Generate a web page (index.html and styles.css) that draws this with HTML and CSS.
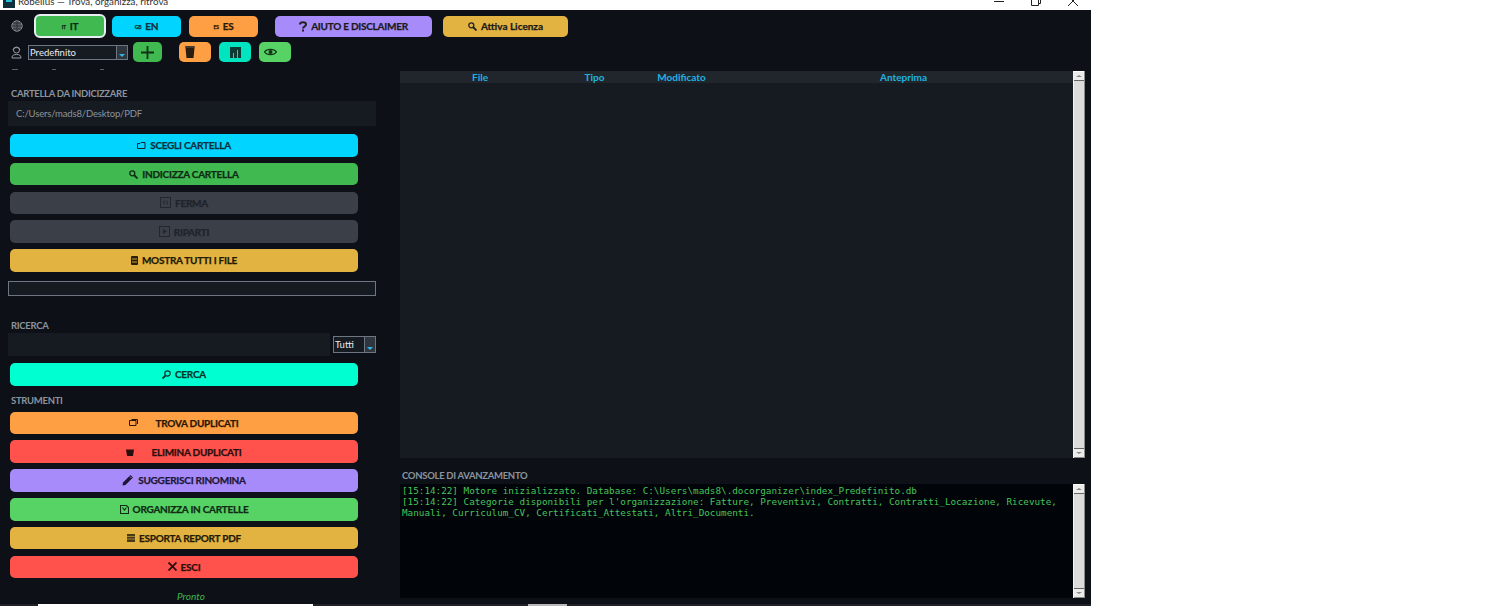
FILE: index.html
```html
<!DOCTYPE html>
<html lang="it">

<head>
	<meta charset="UTF-8">
	<meta name="viewport" content="width=device-width, initial-scale=1.0">
	<title>Robelius</title>
	<link rel="stylesheet" href="styles.css">
</head>

<body>
	<div class="titlebar">
		<div class="title-inner">
			<svg class="app-icon" width="12" height="14" viewBox="0 0 12 14"><rect width="12" height="14" fill="#12303c"/><rect x="3" y="2" width="6" height="6" fill="#23c4d8"/></svg>
			<span class="title-text">Robelius — Trova, organizza, ritrova</span>
			<div class="win-controls">
				<svg width="10" height="10" viewBox="0 0 10 10"><path d="M0 5.5H10" stroke="#222"/></svg>
				<svg width="10" height="10" viewBox="0 0 10 10"><path d="M.5 2.500h7v7h-7zM2.500 2.500v-2h7v7h-2" stroke="#222" fill="none"/></svg>
				<svg width="10" height="10" viewBox="0 0 10 10"><path d="M0 0L10 10M10 0L0 10" stroke="#222"/></svg>
			</div>
		</div>
	</div>

	<div class="app">
		<div class="toolbar">
			<svg class="globe" width="12" height="12" viewBox="0 0 12 12"><circle cx="6" cy="6" r="5.200" fill="#555a60" stroke="#8b8f94"/><path d="M1 6h10M6 1v10M2 3h8M2 9h8" stroke="#25282c" stroke-width=".8"/></svg>
			<button class="btn btn-lang btn-it active"><small>IT</small> IT</button>
			<button class="btn btn-lang btn-en"><small>GB</small> EN</button>
			<button class="btn btn-lang btn-es"><small>ES</small> ES</button>
			<button class="btn btn-help"><svg width="8" height="11" viewBox="0 0 8 11"><path d="M1 3.500C1 .5 7 .5 7 3.500C7 5.500 4 5.500 4 7.500" fill="none" stroke="#222" stroke-width="2"/><rect x="3" y="8.500" width="2" height="2" fill="#222"/></svg> AIUTO E DISCLAIMER</button>
			<button class="btn btn-license"><svg width="9" height="9" viewBox="0 0 9 9"><circle cx="3.300" cy="3.300" r="2.500" fill="none" stroke="#222" stroke-width="1.300"/><path d="M5 5L8.500 8.500" stroke="#222" stroke-width="1.800"/></svg> Attiva Licenza</button>
		</div>

		<div class="profile-row">
			<svg class="user-icon" width="11" height="13" viewBox="0 0 11 13"><circle cx="5.500" cy="4" r="3" fill="none" stroke="#9a9da1"/><path d="M2 3.500C3 1 8 1 9 3.500M1 12C1 9 3 8.500 5.500 8.500S10 9 10 12Z" fill="none" stroke="#9a9da1"/></svg>
			<div class="combo combo-profile"><span>Predefinito</span><i class="combo-arrow"></i></div>
			<button class="btn btn-square btn-add"><svg width="13" height="13" viewBox="0 0 13 13"><path d="M6.500 0V13M0 6.500H13" stroke="#123018" stroke-width="1.800"/></svg></button>
			<button class="btn btn-square btn-trash"><svg class="ic-left" width="10" height="12" viewBox="0 0 10 12"><path d="M.5 2H9.500L8.500 12H1.500Z" fill="#2a1c10"/><rect y="0" width="10" height="2" rx="1" fill="#4a3a2c"/></svg></button>
			<button class="btn btn-square btn-stats"><svg width="11" height="11" viewBox="0 0 11 11"><path d="M0 0H11V11H8V3H7V11H4V6H3V11H0Z" fill="#0e3a34"/></svg></button>
			<button class="btn btn-square btn-view"><svg class="ic-left" width="13" height="8" viewBox="0 0 13 8"><path d="M.5 4C3 .5 10 .5 12.500 4C10 7.500 3 7.500 .5 4Z" fill="none" stroke="#12321a" stroke-width="1.200"/><circle cx="6.500" cy="4" r="2" fill="#12321a"/></svg></button>
		</div>

		<div class="dashes"><i></i><i></i><i></i></div>

		<div class="main">
			<div class="sidebar">
				<div class="section-label">CARTELLA DA INDICIZZARE</div>
				<div class="path-field">C:/Users/mads8/Desktop/PDF</div>

				<div class="btn-stack">
					<button class="btn btn-wide c-cyan"><svg width="9" height="7" viewBox="0 0 9 7"><path d="M.5 1.500h2.500l1-1h4v6h-7.500z" fill="none" stroke="#123"/></svg> SCEGLI CARTELLA</button>
					<button class="btn btn-wide c-green"><svg width="9" height="9" viewBox="0 0 9 9"><circle cx="3.300" cy="3.300" r="2.500" fill="none" stroke="#0f2b14" stroke-width="1.300"/><path d="M5 5L8.500 8.500" stroke="#0f2b14" stroke-width="1.800"/></svg> INDICIZZA CARTELLA</button>
					<button class="btn btn-wide c-off"><svg width="11" height="11" viewBox="0 0 11 11"><rect x=".5" y=".5" width="10" height="10" fill="none" stroke="#23262d"/><path d="M4 3.500V7.500M7 3.500V7.500" stroke="#23262d"/></svg> FERMA</button>
					<button class="btn btn-wide c-off"><svg width="11" height="11" viewBox="0 0 11 11"><rect x=".5" y=".5" width="10" height="10" fill="none" stroke="#23262d"/><path d="M4 3L8 5.500L4 8Z" fill="#23262d"/></svg> RIPARTI</button>
					<button class="btn btn-wide c-yellow"><svg width="7" height="9" viewBox="0 0 7 9"><rect width="7" height="9" rx="1" fill="#2a2008"/><path d="M1 3H6M1 6H6" stroke="#c9a040"/></svg> MOSTRA TUTTI I FILE</button>
				</div>

				<div class="progress"></div>

				<div class="section-label label-search">RICERCA</div>
				<div class="search-row">
					<div class="search-field"></div>
					<div class="combo combo-filter"><span>Tutti</span><i class="combo-arrow"></i></div>
				</div>
				<button class="btn btn-wide c-teal btn-search"><svg width="9" height="9" viewBox="0 0 9 9"><circle cx="5.500" cy="3.500" r="2.700" fill="none" stroke="#06332c" stroke-width="1.200"/><path d="M3.500 5.500L.5 8.500" stroke="#06332c" stroke-width="1.800"/></svg> CERCA</button>

				<div class="section-label label-tools">STRUMENTI</div>
				<div class="btn-stack">
					<button class="btn btn-wide c-orange btn-spread"><svg width="9" height="7" viewBox="0 0 9 7"><path d="M.5 1.500h6.500v5h-6.500zM2.500 .5h6v4.500" fill="none" stroke="#2a1805"/></svg><span>TROVA DUPLICATI</span></button>
					<button class="btn btn-wide c-red btn-spread"><svg width="8" height="8" viewBox="0 0 8 8"><path d="M0 1.500H8L7 8H1Z" fill="#2a0e0c"/></svg><span>ELIMINA DUPLICATI</span></button>
					<button class="btn btn-wide c-purple"><svg width="12" height="12" viewBox="0 0 12 12"><path d="M8.500 1L11 3.500L3.500 11L.5 11.500L1 8.500Z" fill="#1e1638"/><path d="M8 2.500L9.500 4" stroke="#a78bfa"/></svg> SUGGERISCI RINOMINA</button>
					<button class="btn btn-wide c-lime"><svg width="9" height="9" viewBox="0 0 9 9"><path d="M.5 2.500V8.500H8.500V2.500L6.500 .5H.5ZM2.500 2.500L4.500 5L6.500 2.500" fill="none" stroke="#0f2b14" stroke-width="1.100"/></svg> ORGANIZZA IN CARTELLE</button>
					<button class="btn btn-wide c-yellow"><svg width="8" height="8" viewBox="0 0 8 8"><rect width="8" height="8" fill="#4a3a14"/><path d="M0 2.500H8M0 5H8" stroke="#c9a040" stroke-width=".7"/></svg> ESPORTA REPORT PDF</button>
					<button class="btn btn-wide c-red"><svg width="9" height="9" viewBox="0 0 9 9"><path d="M.5 .5L8.500 8.500M8.500 .5L.5 8.500" stroke="#2a0e0c" stroke-width="1.800"/></svg> ESCI</button>
				</div>

				<div class="status">Pronto</div>
			</div>

			<div class="content">
				<div class="table-wrap">
					<div class="table">
						<div class="table-head">
							<span>File</span>
							<span>Tipo</span>
							<span>Modificato</span>
							<span>Anteprima</span>
						</div>
					</div>
					<div class="scrollbar"><i class="sb-btn"></i><i class="sb-track"></i><i class="sb-btn sb-down"></i></div>
				</div>

				<div class="console-label">CONSOLE DI AVANZAMENTO</div>
				<div class="console">
					<div class="console-text">[15:14:22] Motore inizializzato. Database: C:\Users\mads8\.docorganizer\index_Predefinito.db
[15:14:22] Categorie disponibili per l'organizzazione: Fatture, Preventivi, Contratti, Contratti_Locazione, Ricevute,
Manuali, Curriculum_CV, Certificati_Attestati, Altri_Documenti.</div>
					<div class="scrollbar"><i class="sb-btn"></i><i class="sb-track"></i><i class="sb-btn sb-down"></i></div>
				</div>
			</div>
		</div>
	</div>

	<div class="bottom-strip"><i class="strip-white"></i><i class="strip-thumb"></i></div>
</body>

</html>
```
FILE: styles.css
```css
* {
	box-sizing: border-box;
}

html,
body {
	margin: 0;
	padding: 0;
	height: 610px;
	overflow: hidden;
	background-color: #fff;
	font-family: Lato, "Open Sans", sans-serif;
}

/* title bar, cut off by the top of the picture */
.titlebar {
	height: 10px;
	width: 1091px;
	overflow: hidden;
}

.title-inner {
	display: flex;
	align-items: center;
	height: 16px;
	margin-top: -7px;
	padding-left: 3px;
	font-size: 9.800px;
	color: #333;
}

.app-icon {
	margin-right: 3px;
}

.win-controls {
	display: flex;
	gap: 27px;
	margin-left: auto;
	padding-right: 13px;
}

.app {
	width: 1091px;
	height: 594px;
	background-color: #0d1117;
	overflow: hidden;
}

.btn {
	border: none;
	border-radius: 5px;
	padding: 0;
	font-family: inherit;
	font-weight: 700;
	font-size: 10px;
	letter-spacing: -0.25px;
	-webkit-text-stroke: 0.25px;
	color: #1a1a1a;
	display: flex;
	align-items: center;
	justify-content: center;
	gap: 4px;
}

/* top rows */
.toolbar {
	display: flex;
	align-items: center;
	height: 24px;
	margin-top: 4px;
	padding-left: 11px;
}

.globe {
	margin-right: 11px;
}

.btn-lang {
	width: 69px;
	height: 21px;
	margin-right: 8px;
}

.btn-lang small {
	font-size: 5px;
	margin-top: 2px;
}

.btn-it {
	background-color: #3fb950;
	width: 72px;
	height: 24px;
	border: 2px solid #e6edf3;
	color: #0f2b14;
	border-radius: 6px;
	margin-right: 6px;
}

.btn-en {
	background-color: #00d4ff;
	color: #0c2f3a;
}

.btn-es {
	background-color: #ff9f43;
	color: #2a1805;
	margin-right: 17px;
}

.btn-help {
	width: 157px;
	height: 21px;
	background-color: #a78bfa;
	margin-right: 11px;
}

.btn-license {
	width: 125px;
	height: 21px;
	background-color: #e3b341;
	letter-spacing: 0;
}

.profile-row {
	display: flex;
	align-items: center;
	height: 20px;
	margin-top: 4px;
	padding-left: 11px;
}

.user-icon {
	margin-right: 6px;
}

.combo {
	display: flex;
	align-items: center;
	justify-content: space-between;
	background-color: #161b22;
	border: 1px solid #6e7681;
	color: #e6edf3;
	font-size: 9.500px;
	padding-left: 1px;
}

.combo-profile {
	width: 100px;
	height: 15px;
	margin-right: 5px;
}

.combo-arrow {
	position: relative;
	width: 11px;
	height: 100%;
	background-color: #30363d;
	border-left: 1px solid #6e7681;
}

.combo-arrow::after {
	content: "";
	position: absolute;
	left: 2px;
	bottom: 2px;
	border: 3px solid transparent;
	border-top: 3px solid #2fb4ec;
	border-bottom: 0;
}

.btn-square {
	width: 32px;
	height: 20px;
}

.btn-add {
	width: 29px;
	background-color: #3fb950;
	margin-right: 17px;
}

.btn-trash {
	background-color: #ff9f43;
	margin-right: 8px;
}

.btn-stats {
	background-color: #00e5c0;
	margin-right: 8px;
}

.btn-view {
	background-color: #56d364;
}

.ic-left {
	margin-right: 10px;
}

.dashes {
	display: flex;
	height: 2px;
	margin-top: 7px;
	padding-left: 12px;
}

.dashes i {
	width: 6px;
	height: 1px;
	background-color: #5c6067;
	margin-right: 34px;
}

.dashes i:nth-child(2) {
	width: 4px;
	margin-right: 44px;
}

.dashes i:nth-child(3) {
	width: 4px;
}

/* main area */
.main {
	display: flex;
	align-items: flex-start;
	padding-left: 8px;
}

.sidebar {
	width: 368px;
	flex-shrink: 0;
	margin-right: 24px;
	height: 529px;
	overflow: hidden;
}

.section-label {
	font-size: 9.500px;
	font-weight: 700;
	letter-spacing: -0.3px;
	color: #8b949e;
	padding-left: 3px;
	line-height: 12px;
}

.sidebar > .section-label:first-child {
	margin-top: 17px;
}

.path-field {
	height: 25px;
	margin-top: 1px;
	background-color: #161b22;
	color: #8b949e;
	font-size: 9.500px;
	letter-spacing: -0.15px;
	line-height: 25px;
	padding-left: 8px;
}

.btn-stack {
	display: flex;
	flex-direction: column;
	gap: 6.250px;
	margin-top: 8px;
}

.btn-wide {
	width: 348px;
	height: 22.500px;
	margin-left: 2px;
	flex-shrink: 0;
}

.c-cyan {
	background-color: #00d4ff;
	color: #0c2f3a;
}

.c-green {
	background-color: #3fb950;
	color: #0f2b14;
}

.c-off {
	background-color: #3a3f48;
	color: #20232a;
}

.c-yellow {
	background-color: #e3b341;
	color: #231a05;
}

.c-teal {
	background-color: #00ffd1;
	color: #06332c;
}

.c-orange {
	background-color: #ff9f43;
	color: #2a1805;
}

.c-red {
	background-color: #ff524d;
	color: #2a0e0c;
}

.c-purple {
	background-color: #a78bfa;
	color: #1e1638;
}

.c-lime {
	background-color: #56d364;
	color: #0f2b14;
}

.btn-spread {
	gap: 17px;
}

.progress {
	height: 15px;
	margin-top: 9.500px;
	background-color: #161b22;
	border: 1px solid #6e7681;
}

.label-search {
	margin-top: 24px;
}

.search-row {
	display: flex;
	align-items: center;
	height: 23px;
	margin-top: 1px;
}

.search-field {
	width: 322px;
	height: 23px;
	background-color: #161b22;
	margin-right: 3px;
}

.combo-filter {
	width: 43px;
	height: 17px;
}

.btn-search {
	margin-top: 7px;
}

.label-tools {
	margin-top: 9px;
}

.label-tools + .btn-stack {
	margin-top: 5px;
	gap: 6.350px;
}

.status {
	margin-top: 12px;
	text-align: center;
	width: 366px;
	font-size: 10px;
	line-height: 12px;
	font-style: italic;
	color: #3fb950;
}

.content {
	width: 685px;
	flex-shrink: 0;
}

.table-wrap {
	display: flex;
	height: 387px;
	background-color: #161b22;
}

.table {
	flex: 1;
}

.table-head {
	display: grid;
	grid-template-columns: 160px 69px 105px 1fr;
	height: 12px;
	background-color: #21262d;
	font-size: 10px;
	font-weight: 700;
	line-height: 12px;
	color: #1fb4e0;
	text-align: center;
}

.scrollbar {
	display: flex;
	flex-direction: column;
	width: 12px;
	height: 100%;
	flex-shrink: 0;
	background-color: #dcdcdc;
	border-left: 1px solid #f4f4f4;
	border-right: 1px solid #8a8a8a;
}

.sb-btn {
	position: relative;
	height: 10px;
	flex-shrink: 0;
	background-color: #ececec;
	border-top: 1px solid #fff;
	border-bottom: 1px solid #666;
}

.sb-btn::after {
	content: "";
	position: absolute;
	left: 2px;
	top: 3px;
	border: 3px solid transparent;
	border-bottom: 2px solid #888;
	border-top: 0;
}

.sb-down {
	border-top: 1px solid #666;
	border-bottom: 1px solid #888;
}

.sb-down::after {
	border-top: 2px solid #888;
	border-bottom: 0;
}

.sb-track {
	flex: 1;
}

.console-label {
	margin-top: 12px;
	padding-left: 2px;
	font-size: 9.500px;
	font-weight: 700;
	letter-spacing: -0.3px;
	line-height: 12px;
	color: #8b949e;
}

.console {
	display: flex;
	height: 114px;
	margin-top: 2px;
	background-color: #010409;
}

.console-text {
	flex: 1;
	padding: 1px 2px;
	font-family: "DejaVu Sans Mono", monospace;
	font-size: 9.300px;
	line-height: 11px;
	color: #46c45a;
	white-space: pre-wrap;
}

/* what shows of the next thing below the window */
.bottom-strip {
	display: flex;
	width: 1091px;
	height: 2px;
	background-color: #1f2227;
}

.strip-white {
	width: 275px;
	margin-left: 38px;
	background-color: #fff;
}

.strip-thumb {
	width: 39px;
	margin-left: 215px;
	background-color: #b9b9b9;
}
```
